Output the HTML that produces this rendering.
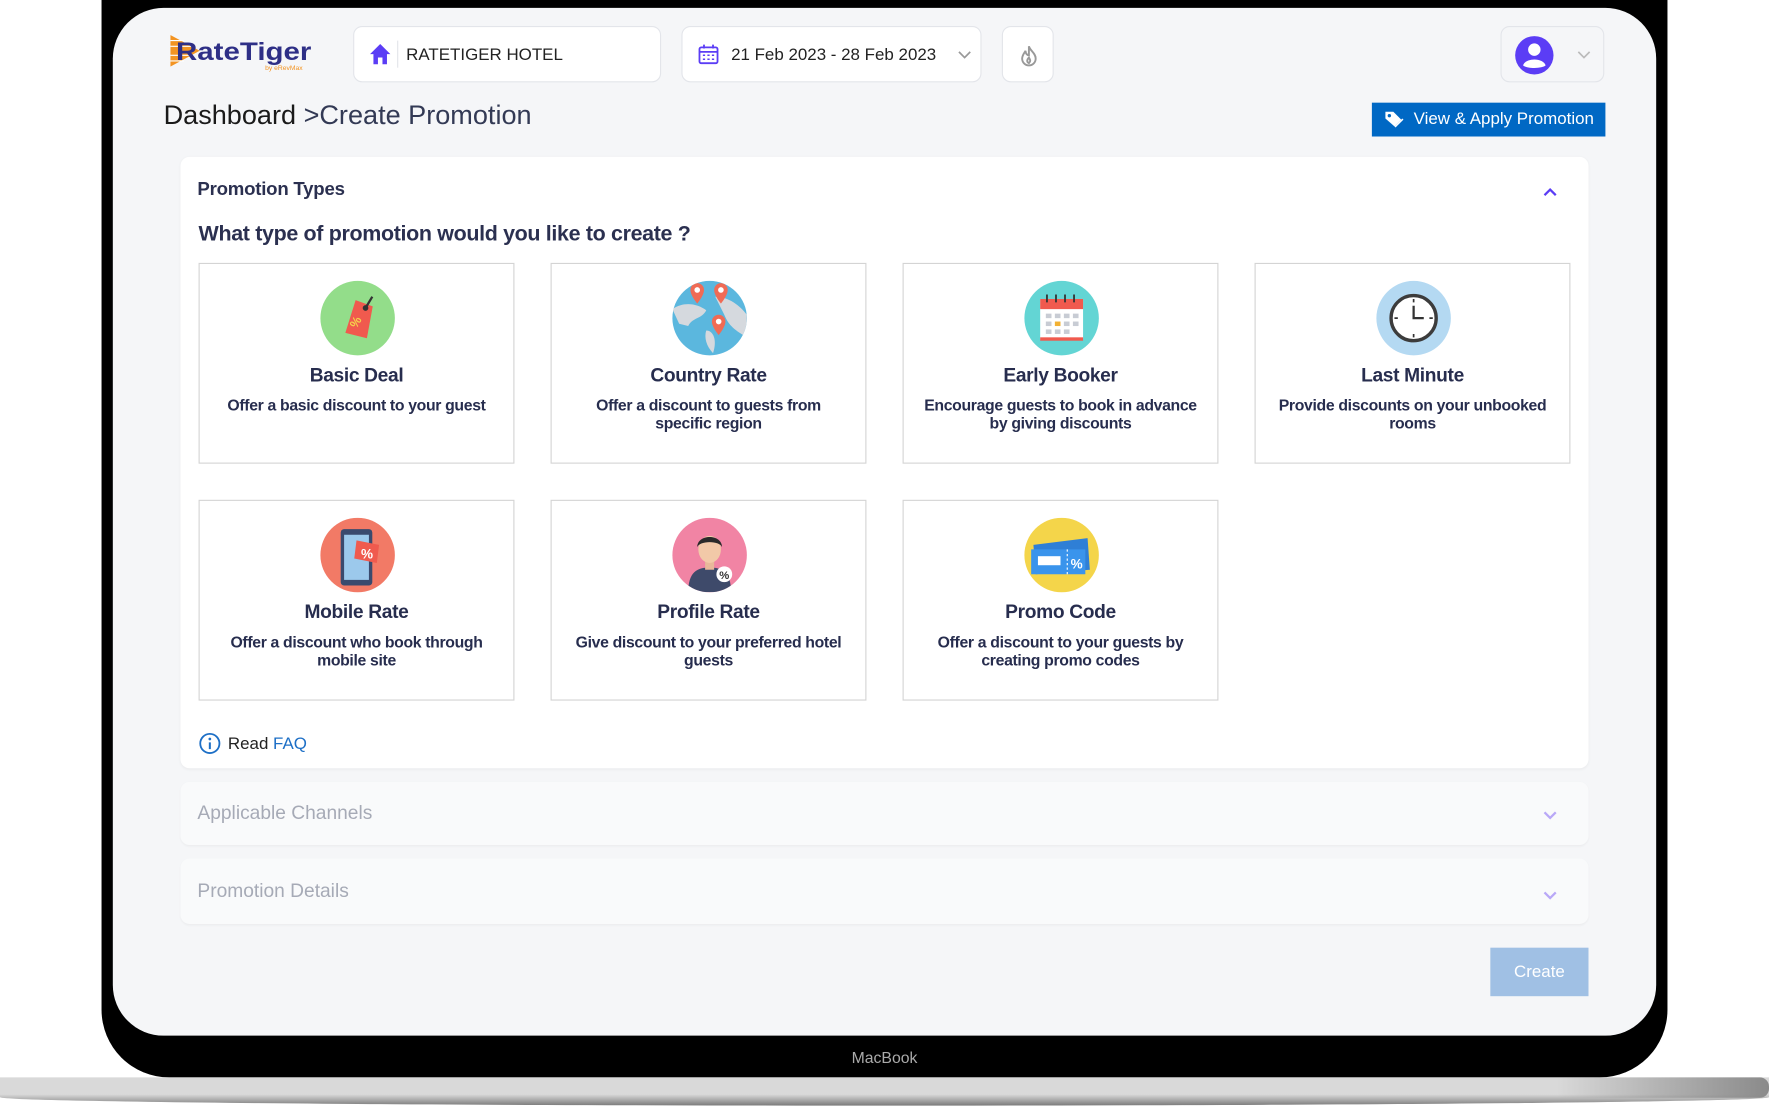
<!DOCTYPE html>
<html><head><meta charset="utf-8"><style>
*{box-sizing:border-box;margin:0;padding:0}
html,body{width:1769px;height:1106px;overflow:hidden;background:#fff;font-family:"Liberation Sans",sans-serif}
#w{position:absolute;left:0;top:0;width:1568px;height:980px;transform:scale(1.12819);transform-origin:0 0}
.abs{position:absolute}
.bezel{left:90px;top:-60px;width:1388px;height:1015px;background:#000;border-radius:60px}
.screen{left:100px;top:7px;width:1368px;height:911px;background:#f5f6f8;border-radius:45px;overflow:hidden}
.base{left:0;top:955px;width:1568px;height:25px;background:linear-gradient(#d9d9d9 0,#d9d9d9 60%,#7a7a7a 100%);border-radius:0 0 50% 50%/0 0 30% 30%}
.base2{left:1380px;top:955px;width:188px;height:18px;background:linear-gradient(90deg,rgba(217,217,217,0),#8a8a8a);border-radius:0 8px 8px 0}
.mac{left:0;width:1568px;top:929px;text-align:center;color:#aaa;font-size:14px}
.box{background:#fff;border:1px solid #e3e5ea;border-radius:8px}
.t{color:#2b3050}
.tile{position:absolute;width:280px;height:178px;background:#fff;border:1.5px solid #d4d4d4;text-align:center}
.tile .ic{position:absolute;left:107px;top:15px;width:66px;height:66px;border-radius:50%;overflow:hidden}
.tile h3{position:absolute;top:89px;left:0;right:0;font-size:17px;font-weight:bold;color:#272d4e;letter-spacing:-0.3px}
.tile p{position:absolute;top:117px;left:14px;right:14px;font-size:14px;font-weight:bold;color:#272d4e;line-height:16px;letter-spacing:-0.3px}
.sec{position:absolute;left:60px;width:1248px;background:#f9fafb;border-radius:8px;box-shadow:0 1px 2px rgba(0,0,0,.04)}
.sec span{position:absolute;left:15px;font-size:17px;color:#a6aab6}
</style></head><body><div id="w">
<div class="abs bezel"></div>
<div class="abs base"></div><div class="abs base2"></div>
<div class="abs mac">MacBook</div>
<div class="abs screen">
 <svg class="abs" style="left:51px;top:22px" width="130" height="36" viewBox="0 0 130 36">
  <polygon points="0,2 0,30 26,16" fill="#f39422"/>
  <g stroke="#fff" stroke-width="1"><line x1="0" y1="7" x2="12" y2="7"/><line x1="0" y1="12" x2="20" y2="12"/><line x1="0" y1="20" x2="20" y2="20"/><line x1="0" y1="25" x2="12" y2="25"/></g>
  <text x="5" y="24" font-family="Liberation Sans" font-weight="bold" font-size="22" fill="#2e2f86" textLength="120" lengthAdjust="spacingAndGlyphs">RateTiger</text>
  <text x="84" y="33" font-family="Liberation Sans" font-size="6" fill="#f39422">by eRevMax</text>
 </svg>
 <div class="abs box" style="left:213px;top:16px;width:273px;height:50px">
  <svg class="abs" style="left:13px;top:14px" width="20" height="20" viewBox="0 0 20 20"><path d="M10 1 L19 10 H16 V19 H12 V13 H8 V19 H4 V10 H1 Z" fill="#5b3df5"/></svg>
  <div class="abs" style="left:38px;top:12px;width:1px;height:24px;background:#e3e5ea"></div>
  <div class="abs t" style="left:46px;top:16px;font-size:15px;color:#222">RATETIGER HOTEL</div>
 </div>
 <div class="abs box" style="left:504px;top:16px;width:266px;height:50px">
  <svg class="abs" style="left:13px;top:14px" width="20" height="20" viewBox="0 0 20 20" fill="none" stroke="#5b3df5" stroke-width="1.6"><rect x="2" y="4" width="16" height="14" rx="1.5"/><line x1="2" y1="8" x2="18" y2="8"/><line x1="6" y1="1.5" x2="6" y2="5"/><line x1="14" y1="1.5" x2="14" y2="5"/><g stroke-width="1.3"><line x1="5" y1="11" x2="7" y2="11"/><line x1="9" y1="11" x2="11" y2="11"/><line x1="13" y1="11" x2="15" y2="11"/><line x1="5" y1="14.5" x2="7" y2="14.5"/><line x1="9" y1="14.5" x2="11" y2="14.5"/><line x1="13" y1="14.5" x2="15" y2="14.5"/></g></svg>
  <div class="abs" style="left:43px;top:16px;font-size:15px;color:#222">21 Feb 2023 - 28 Feb 2023</div>
  <svg class="abs" style="left:243px;top:20px" width="14" height="10" viewBox="0 0 14 10"><path d="M2 2 L7 7 L12 2" fill="none" stroke="#999" stroke-width="1.5"/></svg>
 </div>
 <div class="abs box" style="left:788px;top:16px;width:46px;height:50px">
  <svg class="abs" style="left:14px;top:15px" width="18" height="20" viewBox="0 0 18 20" fill="none" stroke="#999" stroke-width="1.7"><path d="M9 2 C10 6 15 8 15 13 A6 6 0 0 1 3 13 C3 10 5 8 6 6 C6 9 8 10 9 10 Z"/><path d="M9 12 C10 14 11 15 9 17 C7 16 7 14 9 12Z"/></svg>
 </div>
 <div class="abs box" style="left:1230px;top:16px;width:92px;height:50px;background:#f5f6f8">
  <svg class="abs" style="left:11px;top:7px" width="36" height="36" viewBox="0 0 36 36"><circle cx="18" cy="18" r="17" fill="#5b3df5"/><circle cx="18" cy="13" r="5.5" fill="#fff"/><path d="M8 27 C10 20 26 20 28 27 C25 30 11 30 8 27Z" fill="#fff"/></svg>
  <svg class="abs" style="left:66px;top:20px" width="14" height="10" viewBox="0 0 14 10"><path d="M2 2 L7 7 L12 2" fill="none" stroke="#bbb" stroke-width="1.5"/></svg>
 </div>
 <div class="abs" style="left:45px;top:82px;font-size:24px;color:#1a1a1a;font-weight:300">Dashboard <span style="color:#333a55">&gt;Create Promotion</span></div>
 <div class="abs" style="left:1116px;top:84px;width:207px;height:30px;background:#0068c4;color:#fff;font-size:15px;line-height:30px;padding-left:37px">View &amp; Apply Promotion
  <svg class="abs" style="left:11px;top:6px" width="18" height="18" viewBox="0 0 18 18"><path d="M1 2 H8 L15 9 L9 15 L1 8Z" fill="#fff"/><circle cx="4.5" cy="5.5" r="1.5" fill="#0068c4"/><path d="M9 15 L16 8 L17 9 L10 16Z" fill="#fff"/></svg>
 </div>
 <div class="abs" style="left:60px;top:132px;width:1248px;height:542px;background:#fff;border-radius:8px;box-shadow:0 1px 3px rgba(0,0,0,.05)">
  <div class="abs t" style="left:15px;top:20px;font-size:16.5px;font-weight:bold;letter-spacing:-0.2px">Promotion Types</div>
  <svg class="abs" style="left:1207px;top:26px" width="14" height="10" viewBox="0 0 14 10"><path d="M2 8 L7 3 L12 8" fill="none" stroke="#5b3df5" stroke-width="2"/></svg>
  <div class="abs t" style="left:16px;top:58px;font-size:19px;font-weight:bold;letter-spacing:-0.3px">What type of promotion would you like to create ?</div>

  <div class="tile" style="left:16px;top:94px"><div class="ic" style="background:#93dd8a"><svg width="66" height="66" viewBox="0 0 66 66"><path d="M34 17 L48 25 L38 52 L20 44 Z" fill="#f05a4e" transform="rotate(-10 33 33)"/><circle cx="40" cy="24" r="2.5" fill="#333"/><line x1="40" y1="24" x2="46" y2="14" stroke="#333" stroke-width="2"/><text x="27" y="42" font-size="11" fill="#f5d24a" font-weight="bold" transform="rotate(-60 30 38)">%</text></svg></div><h3>Basic Deal</h3><p>Offer a basic discount to your guest</p></div>

  <div class="tile" style="left:328px;top:94px"><div class="ic" style="background:#5bb7de"><svg width="66" height="66" viewBox="0 0 66 66"><path d="M0 25 C10 18 22 20 30 26 C26 34 18 32 14 40 L6 38Z" fill="#d5d9de"/><path d="M38 14 C50 14 60 22 66 30 L66 50 C56 44 50 40 46 30Z" fill="#d5d9de"/><path d="M30 44 C36 44 40 52 36 64 C30 58 28 50 30 44Z" fill="#d5d9de"/><g fill="#f06b55"><path d="M16 8 a6 6 0 0 1 12 0 c0 5 -6 12 -6 12 s-6 -7 -6 -12z"/><path d="M37 8 a6 6 0 0 1 12 0 c0 5 -6 12 -6 12 s-6 -7 -6 -12z"/><path d="M35 36 a6 6 0 0 1 12 0 c0 5 -6 12 -6 12 s-6 -7 -6 -12z"/></g><g fill="#fff"><circle cx="22" cy="8" r="2.5"/><circle cx="43" cy="8" r="2.5"/><circle cx="41" cy="36" r="2.5"/></g></svg></div><h3>Country Rate</h3><p>Offer a discount to guests from specific region</p></div>

  <div class="tile" style="left:640px;top:94px"><div class="ic" style="background:#63d5d4"><svg width="66" height="66" viewBox="0 0 66 66"><rect x="14" y="16" width="38" height="36" fill="#fff"/><rect x="14" y="16" width="38" height="9" fill="#f05a4e"/><g stroke="#333" stroke-width="1.6"><line x1="20" y1="12" x2="20" y2="19"/><line x1="28" y1="12" x2="28" y2="19"/><line x1="36" y1="12" x2="36" y2="19"/><line x1="44" y1="12" x2="44" y2="19"/></g><g fill="#c8ccd4"><rect x="19" y="29" width="5" height="4"/><rect x="27" y="29" width="5" height="4"/><rect x="35" y="29" width="5" height="4"/><rect x="43" y="29" width="5" height="4"/><rect x="19" y="36" width="5" height="4"/><rect x="35" y="36" width="5" height="4"/><rect x="43" y="36" width="5" height="4"/><rect x="19" y="43" width="5" height="4"/><rect x="27" y="43" width="5" height="4"/><rect x="35" y="43" width="5" height="4"/></g><rect x="27" y="36" width="5" height="4" fill="#f2b134"/><rect x="14" y="50" width="38" height="3" fill="#f05a4e"/></svg></div><h3>Early Booker</h3><p>Encourage guests to book in advance by giving discounts</p></div>

  <div class="tile" style="left:952px;top:94px"><div class="ic" style="background:#b4d9f2"><svg width="66" height="66" viewBox="0 0 66 66"><circle cx="33" cy="33" r="20" fill="#fff" stroke="#3c3c3c" stroke-width="3"/><g stroke="#333" stroke-width="1.5"><line x1="33" y1="16" x2="33" y2="19"/><line x1="33" y1="47" x2="33" y2="50"/><line x1="16" y1="33" x2="19" y2="33"/><line x1="47" y1="33" x2="50" y2="33"/></g><path d="M33 22 V33 H42" fill="none" stroke="#333" stroke-width="2"/></svg></div><h3>Last Minute</h3><p>Provide discounts on your unbooked rooms</p></div>

  <div class="tile" style="left:16px;top:304px"><div class="ic" style="background:#f27a66"><svg width="66" height="66" viewBox="0 0 66 66"><rect x="18" y="10" width="28" height="50" rx="3" fill="#3a4a6e"/><rect x="21" y="15" width="22" height="40" fill="#9cc9ec"/><path d="M32 20 L52 24 L50 40 L30 36Z" fill="#f05a4e"/><text x="36" y="36" font-size="12" fill="#fff" font-weight="bold">%</text></svg></div><h3>Mobile Rate</h3><p>Offer a discount who book through mobile site</p></div>

  <div class="tile" style="left:328px;top:304px"><div class="ic" style="background:#f184a4"><svg width="66" height="66" viewBox="0 0 66 66"><path d="M14 66 C14 48 22 44 33 44 C44 44 52 48 52 66Z" fill="#3e4a6a"/><rect x="29" y="36" width="8" height="10" fill="#e8b89a"/><ellipse cx="33" cy="28" rx="10" ry="12" fill="#f2c9a8"/><path d="M22 26 C22 14 44 14 44 26 C42 20 24 20 22 26Z" fill="#2a2a2a"/><circle cx="46" cy="50" r="7" fill="#fff"/><text x="41.5" y="54" font-size="10" fill="#333" font-weight="bold">%</text></svg></div><h3>Profile Rate</h3><p>Give discount to your preferred hotel guests</p></div>

  <div class="tile" style="left:640px;top:304px"><div class="ic" style="background:#f4d54a"><svg width="66" height="66" viewBox="0 0 66 66"><path d="M8 24 L56 18 L58 46 L10 50Z" fill="#2f7fd6"/><path d="M6 28 L54 28 L54 50 L6 50Z" fill="#3a94ec"/><line x1="38" y1="28" x2="38" y2="50" stroke="#fff" stroke-dasharray="2 2"/><rect x="12" y="34" width="20" height="8" fill="#fff"/><text x="41" y="45" font-size="12" fill="#fff" font-weight="bold">%</text></svg></div><h3>Promo Code</h3><p>Offer a discount to your guests by creating promo codes</p></div>

  <svg class="abs" style="left:16px;top:510px" width="20" height="20" viewBox="0 0 20 20"><circle cx="10" cy="10" r="8.5" fill="none" stroke="#1d6fc6" stroke-width="1.6"/><circle cx="10" cy="6" r="1.2" fill="#1d6fc6"/><line x1="10" y1="9" x2="10" y2="15" stroke="#1d6fc6" stroke-width="1.8"/></svg>
  <div class="abs" style="left:42px;top:512px;font-size:15px;color:#222">Read <span style="color:#1d6fc6">FAQ</span></div>
 </div>
 <div class="sec" style="top:686px;height:56px"><span style="top:18px">Applicable Channels</span><svg class="abs" style="left:1207px;top:25px" width="14" height="10" viewBox="0 0 14 10"><path d="M2 2 L7 7 L12 2" fill="none" stroke="#b9a8f7" stroke-width="2"/></svg></div>
 <div class="sec" style="top:754px;height:58px"><span style="top:19px">Promotion Details</span><svg class="abs" style="left:1207px;top:28px" width="14" height="10" viewBox="0 0 14 10"><path d="M2 2 L7 7 L12 2" fill="none" stroke="#b9a8f7" stroke-width="2"/></svg></div>
 <div class="abs" style="left:1221px;top:833px;width:87px;height:43px;background:#a0c0e4;color:#fff;font-size:15px;text-align:center;line-height:43px">Create</div>
</div>
</div></body></html>
